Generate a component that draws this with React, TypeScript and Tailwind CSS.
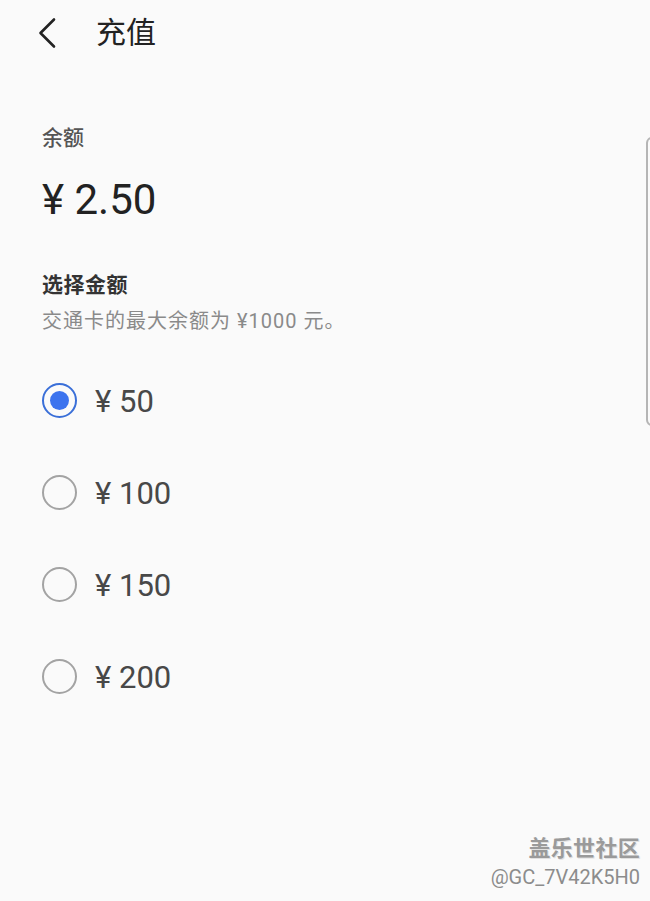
import { useState } from 'react';

const amounts = ['50', '100', '150', '200'];

const font = "font-['Roboto','Noto_Sans_CJK_SC',sans-serif]";

const App = () => {
  const [selected, setSelected] = useState('50');

  return (
    <div className={`relative w-[650px] h-[901px] overflow-hidden bg-[#fafafa] ${font}`}>
      {/* Header */}
      <div className="flex items-center h-[66px]">
        <button className="ml-[36px] w-[22px] h-[34px] flex items-center justify-center">
          <svg width="20" height="32" viewBox="0 0 20 32" fill="none" stroke="#222" strokeWidth="2.6" strokeLinecap="round" strokeLinejoin="round">
            <path d="M17 2.5L3.5 16L17 29.5" />
          </svg>
        </button>
        <h1 className="ml-[38px] text-[30px] leading-[36px] text-[#222] font-normal">充值</h1>
      </div>

      <div className="px-[42px]">
        <div className="mt-[58px] text-[21px] leading-[28px] font-medium text-[#555]">余额</div>
        <div className="mt-[23px] text-[42px] leading-[50px] text-[#222]">¥ 2.50</div>

        <div className="mt-[46px] text-[21px] leading-[28px] font-bold text-[#333] tracking-[0.5px]">选择金额</div>
        <div className="mt-[9px] text-[20px] leading-[26px] tracking-[1px] text-[#8a8a8a]">交通卡的最大余额为 ¥1000 元。</div>

        <div className="mt-[20px] flex flex-col">
          {amounts.map((a) => (
            <label key={a} className="flex items-center h-[92px] cursor-pointer" onClick={() => setSelected(a)}>
              {selected === a ? (
                <span className="w-[35px] h-[35px] rounded-full border-2 border-[#3a6fd8] flex items-center justify-center">
                  <span className="w-[19px] h-[19px] rounded-full bg-[#3c73ee]" />
                </span>
              ) : (
                <span className="w-[35px] h-[35px] rounded-full border-2 border-[#a3a3a3]" />
              )}
              <span className="ml-[18px] pt-[3px] text-[31px] leading-[36px] text-[#484848]">¥ {a}</span>
            </label>
          ))}
        </div>
      </div>

      {/* scroll indicator */}
      <div className="absolute top-[137px] right-[-8px] w-[12px] h-[289px] rounded-[6px] border-2 border-[#b5b5b5]" />

      {/* watermark */}
      <div className="absolute right-[10px] bottom-[10px] flex flex-col items-end">
        <span className="text-[22px] leading-[28px] font-bold tracking-[0.3px] text-[#9a9a9a] [text-shadow:1px_1px_0_#e0e0e0]">盖乐世社区</span>
        <span className="text-[20px] leading-[28px] text-[#8c8c8c]">@GC_7V42K5H0</span>
      </div>
    </div>
  );
};

export default App;
